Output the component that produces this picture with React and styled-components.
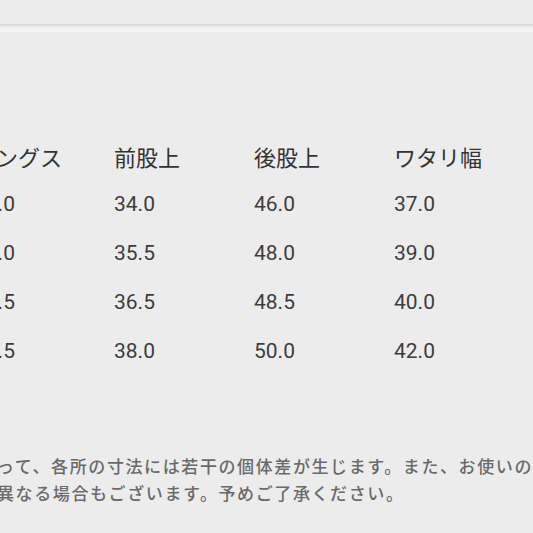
import React from 'react';
import styled, { createGlobalStyle } from 'styled-components';

const GlobalStyle = createGlobalStyle`
  html, body {
    margin: 0;
    padding: 0;
    background: #ececec;
    overflow: hidden;
  }
  body {
    font-family: Roboto, "Noto Sans CJK JP", sans-serif;
    color: #353535;
  }
`;

const Page = styled.div`
  width: 533px;
  height: 533px;
  overflow: hidden;
  background: #ececec;
`;

const Rule = styled.div`
  margin-top: 24px;
  height: 2px;
  background: #dadada;
  border-bottom: 2px solid #ececec;
  box-shadow: 0 4px 0 0 #f4f4f4;
`;

const Table = styled.div`
  display: grid;
  grid-template-columns: repeat(5, 140px);
  grid-auto-rows: 49px;
  align-items: center;
  margin-top: 103px;
  margin-left: -26px;
  width: 700px;
`;

const Head = styled.div`
  font-family: "Noto Sans CJK JP", sans-serif;
  font-size: 22px;
  line-height: 1;
  color: #333;
  white-space: nowrap;
`;

const Cell = styled.div`
  font-family: Roboto, "Noto Sans CJK JP", sans-serif;
  font-size: 21px;
  line-height: 1;
  color: #3c3c3c;
  white-space: nowrap;
`;

const Note = styled.div`
  margin-top: 76px;
  margin-left: -3px;
  font-family: "Noto Sans CJK JP", sans-serif;
  font-size: 17px;
  font-weight: 500;
  line-height: 27px;
  letter-spacing: 1.6px;
  color: #6a6a6a;
`;

const NoteLine = styled.div`
  white-space: nowrap;
`;

const headers = ['レングス', '前股上', '後股上', 'ワタリ幅', '裾幅'];

const rows = [
  ['78.0', '34.0', '46.0', '37.0', '22.0'],
  ['79.0', '35.5', '48.0', '39.0', '23.0'],
  ['80.5', '36.5', '48.5', '40.0', '24.0'],
  ['81.5', '38.0', '50.0', '42.0', '25.0'],
];

export default function App() {
  return (
    <Page>
      <GlobalStyle />
      <Rule />
      <Table>
        {headers.map(h => (
          <Head key={h}>{h}</Head>
        ))}
        {rows.map((row, i) =>
          row.map((v, j) => <Cell key={`${i}-${j}`}>{v}</Cell>),
        )}
      </Table>
      <Note>
        <NoteLine>って、各所の寸法には若干の個体差が生じます。また、お使いの環境により</NoteLine>
        <NoteLine>異なる場合もございます。予めご了承ください。</NoteLine>
      </Note>
    </Page>
  );
}
